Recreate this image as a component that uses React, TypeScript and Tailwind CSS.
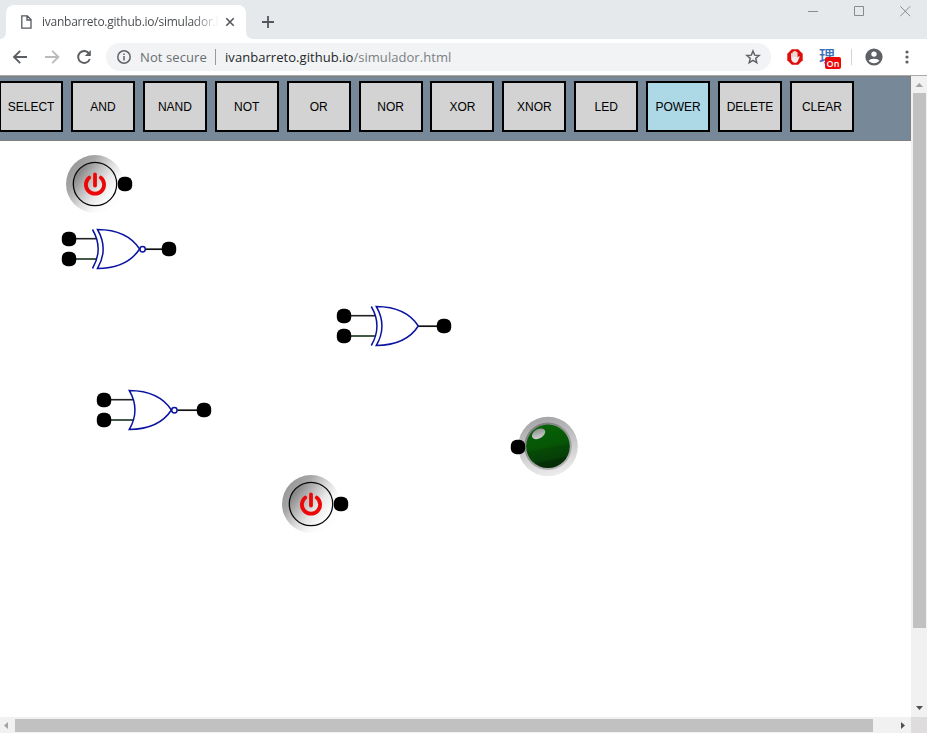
import React from "react";

const tools = ["SELECT", "AND", "NAND", "NOT", "OR", "NOR", "XOR", "XNOR", "LED", "POWER", "DELETE", "CLEAR"];

type GateKind = "xnor" | "xor" | "nor";

function Pin({ x, y }: { x: number; y: number }) {
  return <rect x={x - 7.2} y={y - 7.2} width="14.4" height="14.4" rx="6" fill="#000" />;
}

function Gate({ kind }: { kind: GateKind }) {
  const back = kind === "xnor" ? 36.5 : kind === "xor" ? 40.3 : 33.3;
  const tip = kind === "xnor" ? 78.6 : kind === "xor" ? 82.3 : 75.4;
  const lineEnd = kind === "xnor" ? 36 : kind === "xor" ? 39.5 : 38;
  const bubble = kind !== "xor";
  return (
    <svg width="120" height="44" viewBox="0 0 120 44" fill="none">
      <path d={`M14 11.7H${lineEnd}`} stroke="#222" strokeWidth="1.6" />
      <path d={`M14 32H${lineEnd}`} stroke="#16301a" strokeWidth="1.6" />
      <path d={`M${bubble ? tip + 6 : tip} 22.2H104`} stroke="#111" strokeWidth="1.7" />
      <g stroke="#0a14a0" strokeWidth="1.5">
        {kind !== "nor" && <path d={`M${back - 5} 2.5Q${back + 6.3} 22 ${back - 5} 41.5`} />}
        <path d={`M${back} 2.5C${back + 19} 2.7 ${back + 34} 9.5 ${tip} 22C${back + 34} 34.5 ${back + 19} 41.3 ${back} 41.5Q${back + 11.3} 22 ${back} 2.5Z`} />
        {bubble && <circle cx={tip + 3} cy="22.3" r="2.7" />}
      </g>
      <Pin x={8} y={12} />
      <Pin x={8} y={32} />
      <Pin x={108} y={22} />
    </svg>
  );
}

function Power({ id }: { id: string }) {
  return (
    <svg width="68" height="60" viewBox="0 0 68 60" fill="none">
      <defs>
        <linearGradient id={`${id}o`} x1="0.08" y1="0.2" x2="0.8" y2="0.75">
          <stop offset="0" stopColor="#999" />
          <stop offset="0.25" stopColor="#a6a6a6" />
          <stop offset="0.6" stopColor="#dedede" />
          <stop offset="0.85" stopColor="#f9f9f9" />
          <stop offset="1" stopColor="#fcfdfc" />
        </linearGradient>
        <linearGradient id={`${id}i`} x1="0.1" y1="0.2" x2="0.9" y2="0.8">
          <stop offset="0" stopColor="#808080" />
          <stop offset="0.3" stopColor="#b4b4b4" />
          <stop offset="0.65" stopColor="#e8e8e8" />
          <stop offset="1" stopColor="#fff" />
        </linearGradient>
      </defs>
      <circle cx="30" cy="30" r="29" fill={`url(#${id}o)`} />
      <circle cx="30" cy="30" r="21.7" fill={`url(#${id}i)`} stroke="#080808" strokeWidth="1.3" />
      <path d="M24.2 23.6A9.1 9.1 0 1 0 35.8 23.6" stroke="#ed0808" strokeWidth="3.8" strokeLinecap="round" />
      <path d="M30 20.5V31.5" stroke="#ed0808" strokeWidth="3.8" strokeLinecap="round" />
      <Pin x={60} y={30} />
    </svg>
  );
}

function Led() {
  return (
    <svg width="70" height="62" viewBox="0 0 70 62" fill="none">
      <defs>
        <linearGradient id="ledRim" x1="0.4" y1="0" x2="0.6" y2="1">
          <stop offset="0" stopColor="#a5a5a8" />
          <stop offset="0.5" stopColor="#c9c9cb" />
          <stop offset="1" stopColor="#ededee" />
        </linearGradient>
        <linearGradient id="ledInner" x1="0.2" y1="0" x2="0.8" y2="1">
          <stop offset="0" stopColor="#777" />
          <stop offset="1" stopColor="#bbb" />
        </linearGradient>
        <linearGradient id="ledGreen" x1="0.4" y1="0" x2="0.6" y2="1">
          <stop offset="0" stopColor="#066206" />
          <stop offset="0.5" stopColor="#065506" />
          <stop offset="0.56" stopColor="#064806" />
          <stop offset="0.78" stopColor="#064008" />
          <stop offset="0.84" stopColor="#053007" />
          <stop offset="1" stopColor="#052b07" />
        </linearGradient>
        <linearGradient id="ledShine" x1="0.8" y1="0" x2="0.3" y2="1">
          <stop offset="0" stopColor="#8b8f8b" />
          <stop offset="1" stopColor="#d2d2d2" />
        </linearGradient>
      </defs>
      <circle cx="38" cy="30.5" r="29.8" fill="url(#ledRim)" />
      <circle cx="38" cy="30.3" r="23.8" fill="url(#ledInner)" />
      <circle cx="38" cy="30.3" r="21.8" fill="url(#ledGreen)" />
      <ellipse cx="28.6" cy="17.8" rx="7.2" ry="4.6" transform="rotate(-30 28.6 17.8)" fill="url(#ledShine)" />
      <Pin x={8} y={31} />
    </svg>
  );
}

function BrowserTabs() {
  return (
    <div className="relative flex h-[39px] bg-[#e6e9ec]">
      <div className="ml-[6px] mt-[5px] flex h-[34px] w-[240px] items-center rounded-t-[8px] bg-white pl-[15px]">
        <svg className="shrink-0" width="11" height="14" viewBox="0 0 11 14" fill="none" stroke="#55595d" strokeWidth="1.3">
          <path d="M.8.8H6.3L10 4.6V13.2H.8ZM6 .8V5H10" />
        </svg>
        <div className="ml-[10px] w-[177px] overflow-hidden whitespace-nowrap bg-gradient-to-r from-[#45484c] from-85% to-transparent to-100% bg-clip-text text-[12px] tracking-[-0.25px] leading-[18px] text-transparent">
          ivanbarreto.github.io/simulador.html
        </div>
        <svg className="ml-[6px] shrink-0" width="10" height="10" viewBox="0 0 10 10" stroke="#53575b" strokeWidth="1.6">
          <path d="M1.3 1.3L8.7 8.7M8.7 1.3L1.3 8.7" />
        </svg>
      </div>
      <svg className="absolute left-[0px] top-[31px]" width="254" height="8" viewBox="0 0 254 8" fill="#fff">
        <path d="M0 8Q6 8 6 0V8ZM246 0Q246 8 254 8H246Z" />
      </svg>
      <svg className="ml-[16px] mt-[16px]" width="12" height="12" viewBox="0 0 12 12" stroke="#53575b" strokeWidth="1.8">
        <path d="M0 6H12M6 0V12" />
      </svg>
      <div className="ml-auto flex pr-[16px] pt-[6px]">
        <svg width="103" height="12" viewBox="0 0 103 12" fill="none" stroke="#888b8e" strokeWidth="1">
          <path d="M0 5.5H10M46.5.5H55.5V9.5H46.5ZM92.3.3L102.2 10.2M102.2.3L92.3 10.2" />
        </svg>
      </div>
    </div>
  );
}

function AddressBar() {
  return (
    <div className="flex h-[37px] items-center border-b border-[#aaa9a8] bg-white">
      <svg className="shrink-0" width="106" height="36" viewBox="0 0 106 36" fill="none" strokeWidth="1.9">
        <path d="M27 18H14.5M20.2 11.8L14 18L20.2 24.2" stroke="#5b5e62" />
        <path d="M45 18H58M52.2 11.8L58.4 18L52.2 24.2" stroke="#b9bbbd" />
        <path d="M89.2 14.7A6 6 0 1 0 89.8 20" stroke="#5b5e62" />
        <path d="M90.8 11V17H84.8Z" fill="#5b5e62" />
      </svg>
      <div className="flex h-[28px] w-[665px] items-center rounded-full bg-[#f1f3f4] pl-[11px] pr-[10px] text-[13px]">
        <svg className="shrink-0" width="14" height="14" viewBox="0 0 14 14" fill="none" stroke="#5f6368" strokeWidth="1.5">
          <circle cx="7" cy="7" r="6.2" />
          <path d="M7 6V10.4M7 3.5V5" />
        </svg>
        <span className="ml-[9px] w-[67px] whitespace-nowrap pt-px tracking-[0.1px] text-[#6a6e73]">Not secure</span>
        <span className="ml-[8px] h-[16px] w-px bg-[#96999d]" />
        <span className="ml-[9px] whitespace-nowrap pt-px tracking-[0.05px] text-[#7b8085]">
          <span className="text-[#25282b]">ivanbarreto.github.io</span>/simulador.html
        </span>
        <svg className="ml-auto shrink-0" width="16" height="16" viewBox="0 0 24 24" fill="none" stroke="#5f6368" strokeWidth="2.2">
          <path d="M12 3L14.5 9.2L21.2 9.7L16.1 14L17.7 20.5L12 17L6.3 20.5L7.9 14L2.8 9.7L9.5 9.2Z" />
        </svg>
      </div>
      <svg className="ml-[16px] shrink-0" width="16" height="16" viewBox="0 0 16 16">
        <path d="M4.8.3H11.2L15.7 4.8V11.2L11.2 15.7H4.8L.3 11.2V4.8Z" fill="#e00c08" />
        <path d="M4.1 8.6V4.6Q4.8 3.6 5.6 4.6V3Q6.4 2 7.2 2.8V2.2Q8 1.3 8.8 2.2V3.2Q9.8 2.4 10.5 3.4V8.6L11.8 7.3Q12.8 7.1 12.6 8.1L10.8 12.2Q9.8 13.9 8 13.9Q5.1 13.7 4.4 11Z" fill="#f4eeee" />
        <path d="M5.7 4.5V8M7.2 3V7.7M8.9 3V8" stroke="#d7a7a5" strokeWidth=".5" />
      </svg>
      <div className="relative ml-[16px] h-[20px] w-[22px] font-['Noto_Sans_CJK_SC',sans-serif] text-[16px] font-medium leading-[16px] text-[#3c70b7]">
        <span>理</span>
        <span className="absolute left-[6px] top-[10px] flex h-[12px] w-[16px] items-center justify-center rounded-[2px] bg-[#ed0808] font-['Open_Sans',sans-serif] text-[9px] font-semibold leading-none text-white">On</span>
      </div>
      <span className="ml-[10px] h-[16px] w-px bg-[#d1d3d5]" />
      <svg className="ml-[13px] shrink-0" width="18" height="18" viewBox="0 0 18 18">
        <circle cx="9" cy="9" r="8.6" fill="#5d6065" />
        <circle cx="9" cy="6.1" r="2.7" fill="#fff" />
        <path d="M3.7 12.7C4.5 10 13.5 10 14.3 12.7C12 16 6 16 3.7 12.7Z" fill="#fff" />
      </svg>
      <svg className="ml-[20.5px] shrink-0" width="6" height="14" viewBox="0 0 6 14" fill="#5d6065">
        <circle cx="3" cy="2" r="1.6" /><circle cx="3" cy="7" r="1.6" /><circle cx="3" cy="12" r="1.6" />
      </svg>
    </div>
  );
}

export default function App() {
  return (
    <div className="flex h-[733px] w-[927px] flex-col overflow-hidden bg-white font-['Open_Sans',sans-serif]">
      <BrowserTabs />
      <AddressBar />
      <div className="flex h-[641px]">
        <main className="flex w-[911px] flex-col">
          <div className="flex h-[65px] gap-[7.9px] overflow-hidden border border-l-0 border-[#808080] bg-[#778899] pt-[4px]">
            {tools.map((t) => (
              <button
                key={t}
                className={`h-[51px] w-[64px] shrink-0 border-2 border-black p-0 text-center font-['Liberation_Sans',Arial,sans-serif] text-[12px] text-black first:-ml-[0.9px] ${t === "POWER" ? "bg-[#add8e6]" : "bg-[#d3d3d3]"}`}
              >
                {t}
              </button>
            ))}
          </div>
          <div className="relative flex-1 bg-white">
            <div className="absolute left-[65px] top-[13px]"><Power id="pa" /></div>
            <div className="absolute left-[61px] top-[86px]"><Gate kind="xnor" /></div>
            <div className="absolute left-[336px] top-[163px]"><Gate kind="xor" /></div>
            <div className="absolute left-[96px] top-[247px]"><Gate kind="nor" /></div>
            <div className="absolute left-[510px] top-[275px]"><Led /></div>
            <div className="absolute left-[281px] top-[333px]"><Power id="pb" /></div>
          </div>
        </main>
        <div className="flex w-[16px] flex-col items-center bg-[#f1f1f1]">
          <svg className="shrink-0" width="16" height="17" viewBox="0 0 16 17"><path d="M4.5 11L8.3 7L12 11Z" fill="#a3a3a3" /></svg>
          <div className="ml-[1px] h-[535px] w-[13px] bg-[#c1c1c1]" />
          <svg className="mt-auto shrink-0" width="16" height="17" viewBox="0 0 16 17"><path d="M5 6L12 6L8.5 10Z" fill="#505050" /></svg>
        </div>
      </div>
      <div className="flex h-[16px] items-center bg-[#f1f1f1]">
        <svg className="shrink-0" width="15" height="16" viewBox="0 0 15 16"><path d="M8 5V12L4 8.5Z" fill="#a3a3a3" /></svg>
        <div className="mt-[1px] h-[13px] w-[858px] bg-[#c1c1c1]" />
        <svg className="ml-auto shrink-0" width="16" height="16" viewBox="0 0 16 16"><path d="M6 5V12L10 8.5Z" fill="#505050" /></svg>
        <div className="h-[16px] w-[16px] bg-[#dedcdd]" />
      </div>
    </div>
  );
}
